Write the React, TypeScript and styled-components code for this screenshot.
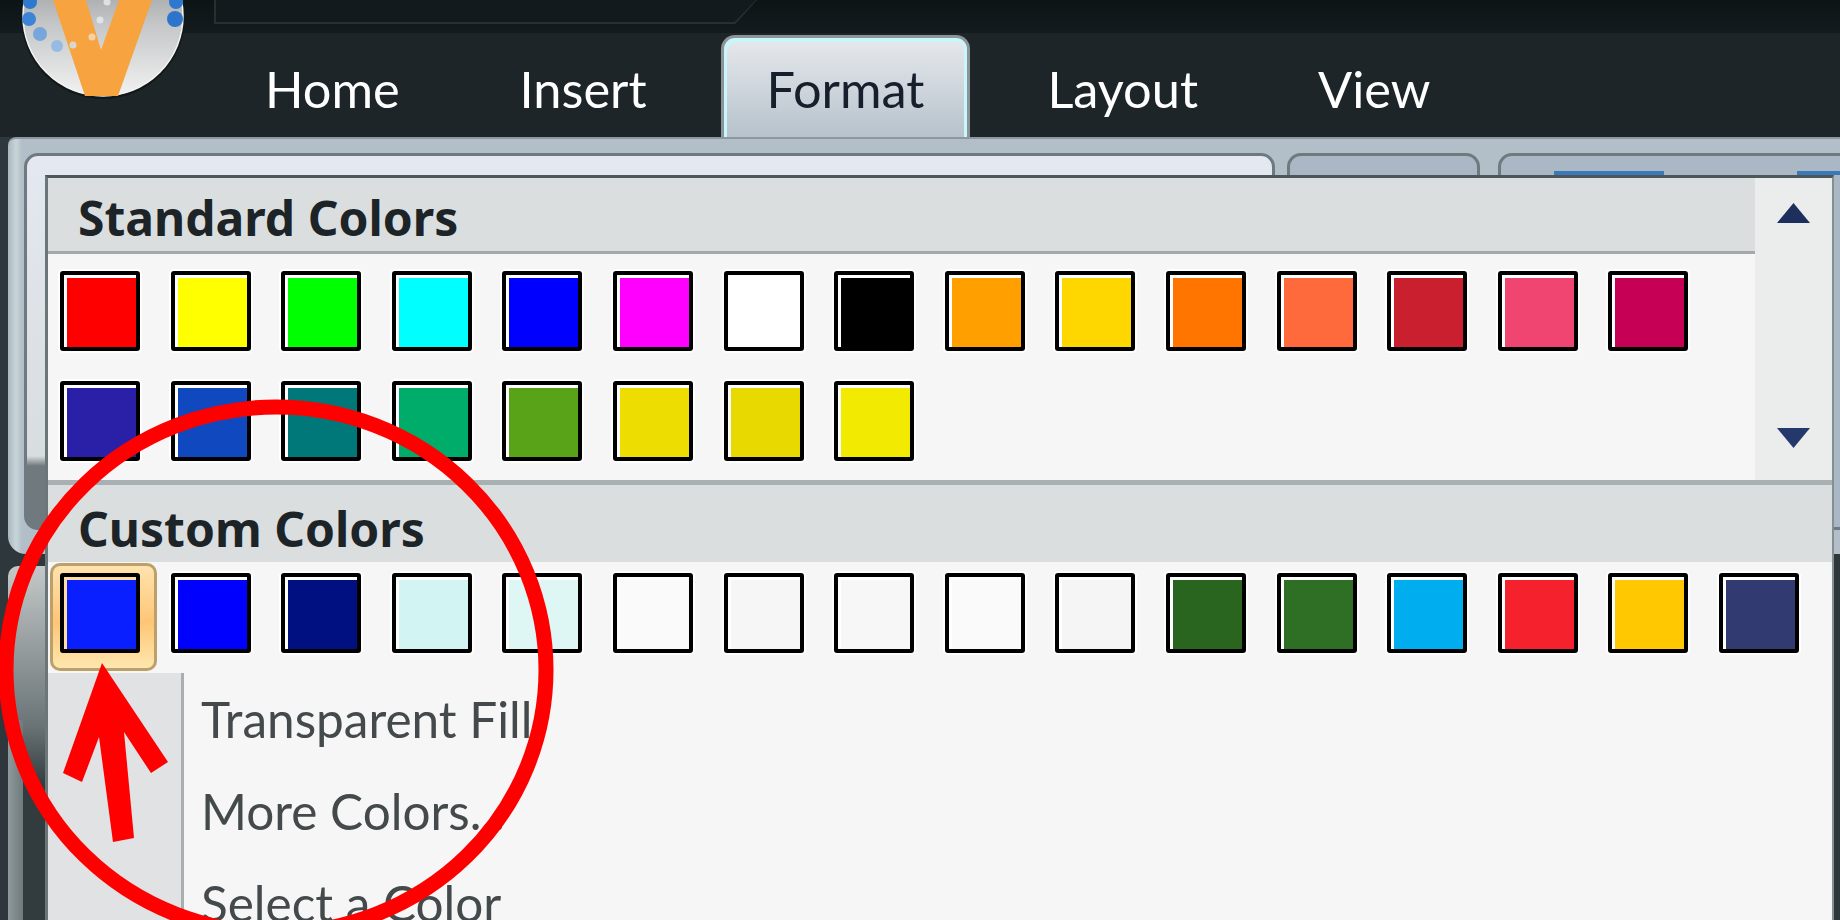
import styled, { createGlobalStyle } from 'styled-components';

const GlobalStyle = createGlobalStyle`
  html, body {
    margin: 0;
    padding: 0;
    background: #2e373b;
    overflow: hidden;
  }
`;

const STANDARD_COLORS = [
  '#ff0000', '#ffff00', '#00ff00', '#00ffff', '#0000ff', '#ff00ff', '#ffffff', '#000000',
  '#ffa000', '#ffd700', '#ff7500', '#ff6a3d', '#c91f2e', '#ef4570', '#c60055',
  '#2a20a8', '#1048c0', '#00787a', '#00ac69', '#58a318', '#eedd00', '#e8da00', '#f2ea00',
];

const CUSTOM_COLORS = [
  '#0a1fff', '#0000ff', '#001080', '#d2f4f2', '#def6f4', '#fafafa', '#f6f6f6', '#f7f7f7',
  '#fafafa', '#f5f5f5', '#2a651f', '#2f6e25', '#00aeef', '#f5222d', '#ffc800', '#323a72',
];

const TABS = ['Home', 'Insert', 'Format', 'Layout', 'View'];
const MENU_ITEMS = ['Transparent Fill', 'More Colors...', 'Select a Color'];

const App = () => {
  return (
    <>
      <GlobalStyle />
      <Page>
        <TopBar>
          <TitleSlot />
        </TopBar>
        <TabBar>
          {TABS.map((tab) => (
            <Tab key={tab} $active={tab === 'Format'}>
              {tab}
            </Tab>
          ))}
        </TabBar>
        <Ribbon>
          <RibbonGroup $width={1251} $active />
          <RibbonGroup $width={193} />
          <RibbonGroup $width={400}>
            <BlueStrip $left={53} $width={110} />
            <BlueStrip $left={296} $width={60} />
          </RibbonGroup>
        </Ribbon>
        <LowerPanel />

        <Logo viewBox="0 0 206 100" aria-hidden="true">
          <defs>
            <linearGradient id="logoFill" x1="0" y1="0" x2="0" y2="1">
              <stop offset="0" stopColor="#d4d7d7" />
              <stop offset="0.1" stopColor="#85898a" />
              <stop offset="0.55" stopColor="#c4c6c7" />
              <stop offset="1" stopColor="#f2f2f2" />
            </linearGradient>
          </defs>
          <circle cx="103" cy="17" r="82" fill="#12181a" />
          <circle cx="103" cy="16" r="80" fill="url(#logoFill)" stroke="#f4f4f4" strokeWidth="1.5" />
          <path d="M53 0 H86 L101 50 L119 0 H152 L118 96 H85 Z" fill="#f7a440" />
          <circle cx="30" cy="2" r="7" fill="#2f78cf" />
          <circle cx="29" cy="19" r="7" fill="#3b84d6" />
          <circle cx="40" cy="34" r="7" fill="#5b9adf" opacity="0.75" />
          <circle cx="57" cy="46" r="6" fill="#7db0e6" opacity="0.7" />
          <circle cx="176" cy="2" r="7" fill="#2f78cf" />
          <circle cx="175" cy="19" r="8" fill="#2c74cc" />
          <circle cx="73" cy="45" r="3.5" fill="#cfe2f5" opacity="0.8" />
          <circle cx="92" cy="37" r="3.5" fill="#eef2f5" opacity="0.6" />
          <circle cx="100" cy="20" r="3.5" fill="#e8ecee" opacity="0.8" />
          <circle cx="107" cy="2" r="3.5" fill="#e8ecee" opacity="0.8" />
        </Logo>

        <ColorMenu>
          <StandardSection>
            <StandardMain>
              <SectionHeader $lined>Standard Colors</SectionHeader>
              <SwatchGrid>
                {STANDARD_COLORS.map((color, i) => (
                  <Swatch key={i} $color={color} />
                ))}
              </SwatchGrid>
            </StandardMain>
            <Scroller>
              <svg width="33" height="20" viewBox="0 0 33 20" aria-hidden="true">
                <path d="M16.5 0 L33 20 H0 Z" fill="#1d2f5c" />
              </svg>
              <svg width="33" height="20" viewBox="0 0 33 20" aria-hidden="true">
                <path d="M0 0 H33 L16.5 20 Z" fill="#24386b" />
              </svg>
            </Scroller>
          </StandardSection>
          <CustomHeader>Custom Colors</CustomHeader>
          <CustomGrid>
            {CUSTOM_COLORS.map((color, i) => (
              <Swatch key={i} $color={color} $selected={i === 0} />
            ))}
          </CustomGrid>
          <MenuList>
            {MENU_ITEMS.map((item) => (
              <MenuRow key={item}>
                <MenuGutter />
                <MenuLabel>{item}</MenuLabel>
              </MenuRow>
            ))}
          </MenuList>
        </ColorMenu>

        <Annotation viewBox="0 0 1840 920" aria-hidden="true">
          <ellipse cx="276" cy="670" rx="270" ry="263" fill="none" stroke="#ff0000" strokeWidth="15" />
          <polygon
            points="102,663 168,762 151,773 124,732 134,838 113,842 99,737 82,782 63,773"
            fill="#ff0000"
          />
        </Annotation>
      </Page>
    </>
  );
};

export default App;

const Page = styled.div`
  position: relative;
  width: 1840px;
  height: 920px;
  overflow: hidden;
  display: flex;
  flex-direction: column;
  background: #2e373b;
`;

const TopBar = styled.div`
  height: 33px;
  flex: none;
  padding-left: 214px;
  box-sizing: border-box;
  background: linear-gradient(#0d1416, #131b1e);
`;

const TitleSlot = styled.div`
  width: 543px;
  height: 24px;
  background: #27302f;
  clip-path: polygon(0 0, 100% 0, 96% 100%, 0 100%);
  position: relative;
  &::after {
    content: '';
    position: absolute;
    inset: 0 1px 2px 2px;
    background: #121a1d;
    clip-path: polygon(0 0, 100% 0, 96% 100%, 0 100%);
  }
`;

const TabBar = styled.div`
  height: 104px;
  flex: none;
  box-sizing: border-box;
  display: flex;
  align-items: flex-end;
  padding-left: 219px;
  gap: 28px;
  background: #1e2528;
`;

const Tab = styled.div<{ $active?: boolean }>`
  box-sizing: border-box;
  height: 102px;
  padding: 5px 46px 0;
  display: flex;
  align-items: center;
  font-family: 'Lato', 'Liberation Sans', sans-serif;
  font-size: 50.5px;
  color: ${(p) => (p.$active ? '#16202c' : '#ffffff')};
  border-radius: 14px 14px 0 0;
  ${(p) =>
    p.$active &&
    `
    padding: 2px 43px 0;
    margin-right: 3px;
    background: linear-gradient(#e6e9ec, #b7c2cc);
    border: 3px solid #8b9498;
    border-bottom: none;
    box-shadow: inset 3px 4px 0 #c8f6fa, inset -3px 0 0 #c8f6fa;
  `}
`;

const Ribbon = styled.div`
  height: 417px;
  flex: none;
  margin-left: 8px;
  padding: 14px 0 0 16px;
  box-sizing: border-box;
  display: flex;
  gap: 12px;
  overflow: hidden;
  border-radius: 8px 0 0 18px;
  background: linear-gradient(90deg, #aab6bc, #c8d6d8 8px, #b2bec8 14px);
  border-top: 2px solid #8d979e;
`;

const RibbonGroup = styled.div<{ $width: number; $active?: boolean }>`
  position: relative;
  flex: none;
  width: ${(p) => p.$width}px;
  height: 377px;
  box-sizing: border-box;
  border: 3px solid #6f7a80;
  border-radius: 14px;
  background: ${(p) => (p.$active ? 'linear-gradient(#e4e8f0, #d8dde0 300px, #70797d 310px)' : '#aab7c4')};
  &:last-child {
    margin-left: 6px;
  }
`;

const BlueStrip = styled.div<{ $left: number; $width: number }>`
  position: absolute;
  top: 15px;
  left: ${(p) => p.$left}px;
  width: ${(p) => p.$width}px;
  height: 4px;
  background: #3b78b8;
`;

const LowerPanel = styled.div`
  flex: 1;
  margin: 12px 0 0 8px;
  width: 40px;
  border-radius: 10px 0 0 0;
  background:
    linear-gradient(90deg, #8f9a9c, #6f7a7c 15px, transparent 15px) bottom / 100% 200px no-repeat,
    linear-gradient(#c4c8c8, #6a7477 45%, #323b3e 62%);
`;

const Logo = styled.svg`
  position: absolute;
  top: 0;
  left: 0;
  width: 206px;
  height: 100px;
`;

const ColorMenu = styled.div`
  position: absolute;
  top: 175px;
  left: 45px;
  right: 6px;
  bottom: 0;
  box-sizing: border-box;
  isolation: isolate;
  background: #f6f6f6;
  border-top: 3px solid #4d575a;
  border-left: 3px solid #6c7679;
  border-right: 2px solid #858e91;
  font-family: 'Noto Sans', 'Liberation Sans', sans-serif;
`;

const StandardSection = styled.div`
  display: flex;
  height: 302px;
`;

const StandardMain = styled.div`
  flex: 1;
`;

const SectionHeader = styled.div<{ $lined?: boolean }>`
  box-sizing: border-box;
  height: 76px;
  padding: 6px 0 0 30px;
  display: flex;
  align-items: center;
  font-family: 'Noto Sans', 'Liberation Sans', sans-serif;
  font-weight: 700;
  font-size: 48px;
  color: #1c2428;
  background: #dbdedf;
  border-bottom: ${(p) => (p.$lined ? '3px solid #a3a9ab' : 'none')};
`;

const CustomHeader = styled(SectionHeader)`
  height: 82px;
  padding-top: 10px;
  border-top: 5px solid #a9b0b2;
`;

const SwatchGrid = styled.div`
  display: flex;
  flex-wrap: wrap;
  gap: 30px 30.6px;
  padding: 17px 0 0 12px;
`;

const CustomGrid = styled(SwatchGrid)`
  flex-wrap: nowrap;
  padding: 11px 0 20px 12px;
`;

const Swatch = styled.div<{ $color: string; $selected?: boolean }>`
  position: relative;
  flex: none;
  box-sizing: border-box;
  width: 80px;
  height: 80px;
  border: 4px solid #000;
  border-radius: 3px;
  background: ${(p) => p.$color};
  box-shadow:
    inset 3px 3px 0 ${(p) => (p.$selected ? '#ffdca0' : '#ffffff')},
    0 0 0 2px ${(p) => (p.$selected ? 'transparent' : '#ffffff')};
  ${(p) =>
    p.$selected &&
    `
    &::before {
      content: '';
      position: absolute;
      z-index: -1;
      top: -14px;
      left: -14px;
      right: -21px;
      bottom: -22px;
      border: 3px solid #bd9f6b;
      border-radius: 10px;
      background: linear-gradient(#ffe3ae, #fdc676 55%, #ffe7ae);
    }
  `}
`;

const Scroller = styled.div`
  flex: none;
  width: 77px;
  box-sizing: border-box;
  padding: 25px 0 32px;
  display: flex;
  flex-direction: column;
  align-items: center;
  justify-content: space-between;
  background: #ebecec;
`;

const MenuList = styled.div`
  display: flex;
  flex-direction: column;
`;

const MenuRow = styled.div`
  display: flex;
  height: 92px;
  flex: none;
`;

const MenuGutter = styled.div`
  flex: none;
  width: 133px;
  background: #e0e2e3;
  border-right: 3px solid #a8aeb1;
`;

const MenuLabel = styled.div`
  padding-left: 17px;
  line-height: 92px;
  font-family: 'Lato', 'Liberation Sans', sans-serif;
  font-size: 49.5px;
  color: #444a4c;
  white-space: nowrap;
`;

const Annotation = styled.svg`
  position: absolute;
  inset: 0;
  width: 1840px;
  height: 920px;
  pointer-events: none;
`;
